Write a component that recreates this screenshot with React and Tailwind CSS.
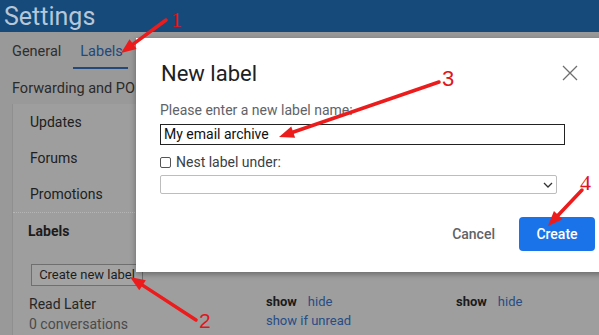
import React from "react";

const font = { fontFamily: "Roboto, 'Liberation Sans', sans-serif" };

function Arrow({ x1, y1, x2, y2 }) {
  const dx = x2 - x1;
  const dy = y2 - y1;
  const len = Math.hypot(dx, dy);
  const ux = dx / len;
  const uy = dy / len;
  const hl = 15;
  const hw = 6;
  const bx = x2 - ux * hl;
  const by = y2 - uy * hl;
  const pts = `${x2},${y2} ${bx - uy * hw},${by + ux * hw} ${bx + uy * hw},${by - ux * hw}`;
  return (
    <g>
      <line x1={x1} y1={y1} x2={bx + ux * 2} y2={by + uy * 2} stroke="#ec1c1c" strokeWidth="3.5" strokeLinecap="round" />
      <polygon points={pts} fill="#ec1c1c" />
    </g>
  );
}

export default function App() {
  return (
    <div className="relative h-[335px] w-[599px] overflow-hidden bg-[#999999]" style={font}>
      {/* page behind the dialog */}
      <div className="flex h-[32px] items-center bg-[#164a7a] pl-[4px]">
        <span className="text-[25px] leading-none text-[#b7c7d8]">Settings</span>
      </div>

      <div className="flex h-[40px] items-center gap-[19px] pl-[12px] text-[14.5px]">
        <span className="text-[#2e2e2e]">General</span>
        <span className="relative text-[#23487c]">
          Labels
          <span className="absolute -left-[7px] -right-[5px] top-[26px] h-[2px] bg-[#23487c]" />
        </span>
      </div>

      <div className="flex h-[32px] items-center pl-[12px] pt-[2px] text-[14.5px] text-[#2a2a2a]">
        Forwarding and POP/IMAP
      </div>

      <div className="ml-[12px] border-l border-[#8f8f8f] bg-[#9e9e9e]">
        <div className="flex flex-col pl-[17px] text-[14px] text-[#202020]">
          <div className="flex h-[36px] items-center">Updates</div>
          <div className="flex h-[36px] items-center">Forums</div>
          <div className="flex h-[36px] items-center">Promotions</div>
        </div>
        <div className="border-t border-dotted border-[#b5b5b5]" />
        <div className="pl-[15px]">
          <div className="flex h-[36px] items-center text-[14px] font-bold text-[#1c1c1c]">Labels</div>
          <div className="pt-[13px]">
            <button className="ml-[3px] h-[22px] w-[112px] border border-[#6f6f6f] bg-[#a3a3a3] text-[13px] text-[#1e1e1e]">
              Create new label
            </button>
          </div>
          <div className="mt-[8px] grid grid-cols-[238px_190px_1fr] text-[14px]">
            <div className="pl-[1px]">
              <div className="leading-[20px] text-[#262626]">Read Later</div>
              <div className="leading-[21px] text-[#4a4a4a]">0 conversations</div>
            </div>
            <div className="text-[13px]">
              <div className="leading-[16px]">
                <span className="font-bold text-[#1a1a1a]">show</span>
                <span className="ml-[11px] text-[#264d86]">hide</span>
              </div>
              <div className="leading-[22px] text-[#264d86]">show if unread</div>
            </div>
            <div className="text-[13px] leading-[16px]">
              <span className="font-bold text-[#1a1a1a]">show</span>
              <span className="ml-[11px] text-[#264d86]">hide</span>
            </div>
          </div>
        </div>
      </div>

      {/* dialog */}
      <div className="absolute left-[136px] top-[38px] h-[234px] w-[480px] bg-white shadow-[0_2px_6px_rgba(0,0,0,0.35)]">
        <div className="flex items-start justify-between pl-[25px] pr-[38px] pt-[22px]">
          <h2 className="text-[22px] leading-[28px] text-[#202124]">New label</h2>
          <svg width="16" height="16" viewBox="0 0 16 16" className="mt-[5px]">
            <path d="M1 1L15 15M15 1L1 15" stroke="#6f6f6f" strokeWidth="1.3" />
          </svg>
        </div>
        <div className="pl-[24px] pt-[13px] text-[14px] leading-[18px] text-[#5f6368]">
          Please enter a new label name:
        </div>
        <div className="ml-[24px] mt-[5px] flex h-[21px] w-[405px] items-center border border-[#222] pl-[3px] text-[14px] text-[#111]">
          My email archive
        </div>
        <div className="ml-[24px] mt-[8px] flex items-center gap-[5px] text-[14px] leading-[18px] text-[#3c4043]">
          <span className="h-[11px] w-[11px] rounded-[2px] border border-[#555]" />
          Nest label under:
        </div>
        <div className="ml-[24px] mt-[4px] flex h-[19px] w-[397px] items-center justify-end rounded-[2px] border border-[#bdbdbd] pr-[3px]">
          <svg width="10" height="6" viewBox="0 0 10 6">
            <path d="M1 1L5 5L9 1" fill="none" stroke="#333" strokeWidth="1.3" />
          </svg>
        </div>
        <div className="mt-[23px] flex items-center justify-end gap-[24px] pr-[21px]">
          <span className="text-[14px] font-medium text-[#5f6368]">Cancel</span>
          <button className="h-[34px] w-[76px] rounded-[4px] bg-[#1a73e8] text-[14px] font-medium text-white">
            Create
          </button>
        </div>
      </div>

      {/* annotations */}
      <svg className="absolute inset-0" width="599" height="335" viewBox="0 0 599 335">
        <Arrow x1={166} y1={20} x2={121} y2={53} />
        <Arrow x1={196} y1={320} x2={130} y2={277} />
        <Arrow x1={439} y1={82} x2={279} y2={137} />
        <Arrow x1={582} y1={190} x2={548} y2={226} />
      </svg>
      <span className="absolute left-[171px] top-[9px] text-[22px] leading-none text-[#e0161c]" style={{ fontFamily: "'Liberation Serif', serif" }}>1</span>
      <span className="absolute left-[199px] top-[310px] text-[21px] leading-none text-[#e0161c]" style={{ fontFamily: "'Liberation Sans', sans-serif" }}>2</span>
      <span className="absolute left-[442px] top-[68px] text-[22px] leading-none text-[#e0161c]" style={{ fontFamily: "'Liberation Sans', sans-serif" }}>3</span>
      <span className="absolute left-[580px] top-[172px] text-[22px] leading-none text-[#e0161c]" style={{ fontFamily: "'Liberation Serif', serif" }}>4</span>
    </div>
  );
}
